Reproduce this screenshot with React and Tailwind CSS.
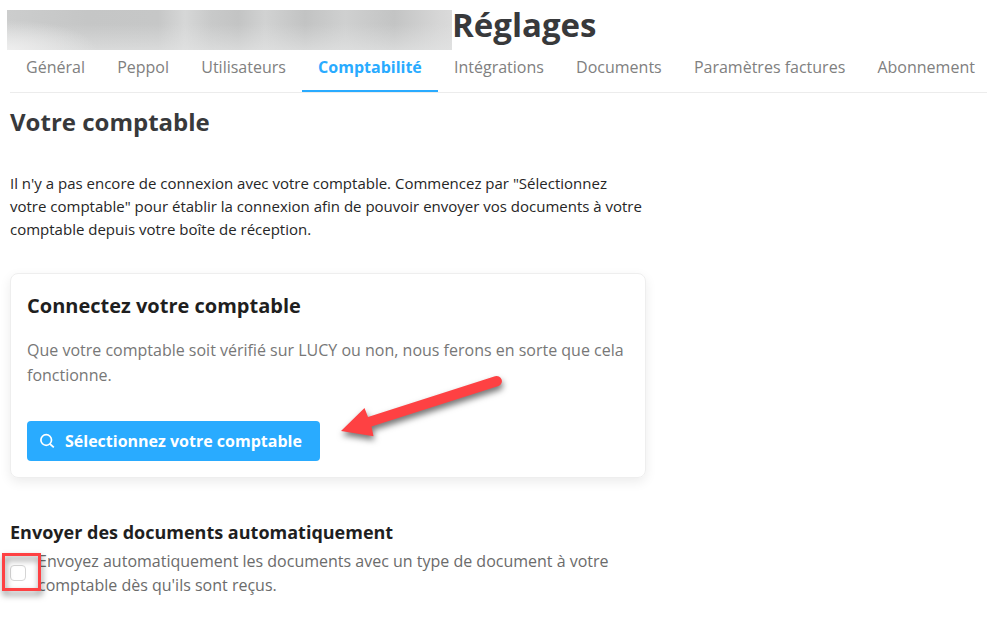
import { useState } from "react";

const TABS = [
  "Général",
  "Peppol",
  "Utilisateurs",
  "Comptabilité",
  "Intégrations",
  "Documents",
  "Paramètres factures",
  "Abonnement",
];

function SearchIcon() {
  return (
    <svg
      width="16"
      height="16"
      viewBox="0 0 16 16"
      fill="none"
      stroke="currentColor"
      strokeWidth="1.7"
      aria-hidden="true"
    >
      <circle cx="7.2" cy="7" r="5.3" />
      <path d="M11 11 14.8 14.4" />
    </svg>
  );
}

function Arrow() {
  return (
    <svg
      className="pointer-events-none absolute top-24 left-[323px] drop-shadow-[1px_4px_3px_rgba(0,0,0,0.55)]"
      width="180"
      height="80"
      viewBox="0 0 180 80"
      aria-hidden="true"
    >
      <path
        d="M7 61 30.5 38 34 47 161 6.3A5 5 0 0 1 164.5 16L37.5 56.5 39.5 66.3Z"
        fill="#fe4143"
      />
    </svg>
  );
}

function Tabs({ actif, onChange }) {
  return (
    <nav className="-mr-1 ml-2.5 flex h-[43px] border-b border-[#ececec]">
      {TABS.map((t) => (
        <button
          key={t}
          type="button"
          onClick={() => onChange(t)}
          className={
            t === actif
              ? "flex-auto border-b-2 border-[#29abff] pb-1.5 text-base font-bold whitespace-nowrap text-[#29abff]"
              : "flex-auto border-b-2 border-transparent pb-1.5 text-base whitespace-nowrap text-[#808080]"
          }
        >
          {t}
        </button>
      ))}
    </nav>
  );
}

export default function App() {
  const [actif, setActif] = useState("Comptabilité");
  const [auto, setAuto] = useState(false);

  return (
    <div className="overflow-x-hidden bg-white pb-7 font-['Open_Sans','Noto_Sans',sans-serif]">
      <header className="flex h-[50px] items-end pl-[7px]">
        {/* Nom de la société masqué */}
        <div className="h-10 w-[445px] shrink-0 bg-[radial-gradient(ellipse_90px_30px_at_0%_100%,rgba(240,240,240,0.9),transparent),linear-gradient(to_bottom,transparent_35%,rgba(228,229,229,0.65)_100%),linear-gradient(to_right,#cccdcd_0%,#c5c6c6_18%,#c6c7c7_34%,#d6d7d7_40%,#c8c9c9_46%,#c3c4c4_52%,#d1d2d2_58%,#c2c3c3_67%,#cfd0d0_76%,#c3c4c4_87%,#d6d6d6_97%,#dadada_100%)]" />
        <h1 className="text-[33px] leading-[50px] font-bold text-[#38393b]">
          Réglages
        </h1>
      </header>

      <Tabs actif={actif} onChange={setActif} />

      <main className="px-2.5">
        <h2 className="mt-[11px] text-2xl leading-9 font-bold text-[#38393b]">
          Votre comptable
        </h2>
        <p className="mt-8 text-[15px] leading-[23px] text-[#262626]">
          Il n'y a pas encore de connexion avec votre comptable. Commencez par
          "Sélectionnez
          <br />
          votre comptable" pour établir la connexion afin de pouvoir envoyer vos
          documents à votre
          <br />
          comptable depuis votre boîte de réception.
        </p>

        <section className="relative mt-8 max-w-[636px] rounded-lg border border-[#eeeeee] p-4 shadow-[0_4px_12px_rgba(0,0,0,0.08)]">
          <h3 className="text-xl leading-8 font-bold text-[#1f1f1f]">
            Connectez votre comptable
          </h3>
          <p className="mt-4 text-base leading-[25px] font-medium text-[#777777]">
            Que votre comptable soit vérifié sur LUCY ou non, nous ferons en
            sorte que cela
            <br />
            fonctionne.
          </p>
          <button
            type="button"
            className="mt-[33px] flex h-10 items-center gap-2.5 rounded bg-[#29abff] pr-[18px] pl-3 text-base font-bold whitespace-nowrap text-white"
          >
            <SearchIcon />
            Sélectionnez votre comptable
          </button>
          <Arrow />
        </section>

        <section className="mt-[41px]">
          <h3 className="text-lg leading-[26px] font-bold text-[#1f1f1f]">
            Envoyer des documents automatiquement
          </h3>
          <div className="mt-1 flex items-center">
            <div className="relative flex w-7 shrink-0">
              <input
                id="envoi-auto"
                type="checkbox"
                checked={auto}
                onChange={(e) => setAuto(e.target.checked)}
                className="size-4 appearance-none rounded border border-[#d5d5d5] bg-white checked:bg-[#29abff]"
              />
              <div className="pointer-events-none absolute -top-3 -left-2 h-[38px] w-[39px] border-[3px] border-[#fe4143] drop-shadow-[1px_4px_3px_rgba(0,0,0,0.5)]" />
            </div>
            <label
              htmlFor="envoi-auto"
              className="text-base leading-6 text-[#6b6b6b]"
            >
              Envoyez automatiquement les documents avec un type de document à
              votre
              <br />
              comptable dès qu'ils sont reçus.
            </label>
          </div>
        </section>
      </main>
    </div>
  );
}
